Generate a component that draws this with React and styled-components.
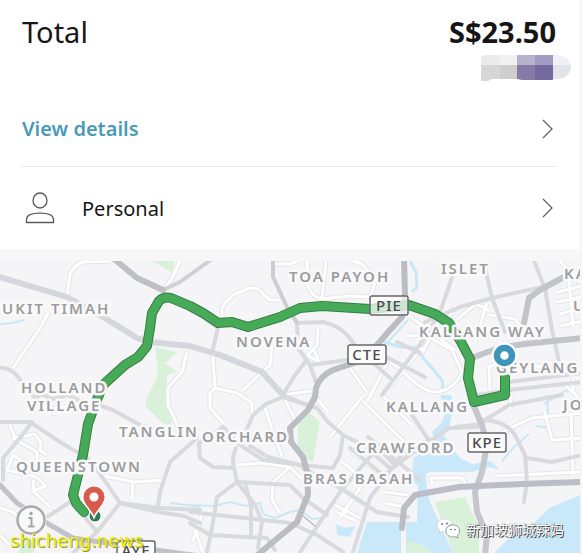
import styled, { createGlobalStyle } from "styled-components";

const GlobalStyle = createGlobalStyle`
  * {
    box-sizing: border-box;
  }
  body {
    margin: 0;
    background-color: #fff;
    font-family: "Noto Sans", "Open Sans", sans-serif;
    color: #161616;
  }
`;
const Page = styled.main`
  padding-right: 2px;
  background-color: #f6f6f6;
`;
const Summary = styled.section`
  padding: 12px 24px 0 22px;
  background-color: #fff;
`;
const TotalRow = styled.div`
  display: flex;
  justify-content: space-between;
  font-size: 29px;
  line-height: 40px;
`;
const TotalLabel = styled.span`
  font-weight: 400;
`;
const TotalPrice = styled.strong`
  font-weight: 700;
`;
const CardNumber = styled.div`
  display: flex;
  justify-content: flex-end;
  height: 36px;
  margin: 3px -16px 0 0;
`;
const Row = styled.a`
  display: flex;
  align-items: center;
  height: ${(props) => props.$height};
  padding-right: 2px;
  border-bottom: ${(props) => (props.$line ? "1px solid #e9e9e9" : "none")};
  color: ${(props) => (props.$accent ? "#4a9bb9" : "#161616")};
  font-size: 20px;
  font-weight: ${(props) => (props.$accent ? 600 : 400)};
  text-decoration: none;
`;
const RowText = styled.span`
  flex: 1;
`;
const RowIcon = styled.span`
  display: flex;
  width: 60px;
  padding-left: 3px;
`;
const MapSection = styled.section`
  position: relative;
  padding-top: 12px;
  background-color: #f7f7f7;
  border-bottom: 2px solid #fff;
  overflow: hidden;
`;
const MapDrawing = styled.svg`
  display: block;
  width: 100%;
  height: auto;
`;
const InfoButton = styled.button`
  position: absolute;
  left: 15px;
  bottom: 17px;
  padding: 0;
  border: none;
  background: none;
  line-height: 0;
  cursor: pointer;
`;
const SiteMark = styled.span`
  position: absolute;
  left: 10px;
  bottom: 0;
  color: #eef000;
  font-family: "DejaVu Sans", sans-serif;
  font-size: 18px;
  line-height: 24px;
  text-shadow: 1px 1px 0 #8f9060;
`;
const AuthorMark = styled.div`
  position: absolute;
  right: 16px;
  bottom: 14px;
  display: flex;
  align-items: center;
  gap: 6px;
  color: #fff;
  font-family: "Noto Sans CJK SC", sans-serif;
  font-size: 14px;
  line-height: 20px;
  text-shadow: 1px 1px 0 #444, 0 0 1px #666;
`;

const Water = styled.path`
  fill: #c9e8fa;
`;
const Park = styled.path`
  fill: #d9f1d9;
`;
const Stream = styled.path`
  fill: none;
  stroke: #c8e8f4;
  stroke-width: ${(props) => props.$width || 2};
`;
const StreetCasing = styled.path`
  fill: none;
  stroke: #e4e5e9;
  stroke-width: 5;
  stroke-linejoin: round;
`;
const Street = styled.path`
  fill: none;
  stroke: #fff;
  stroke-width: 3;
  stroke-linejoin: round;
`;
const Road = styled.path`
  fill: none;
  stroke: ${(props) => props.$color || "#d9dade"};
  stroke-width: ${(props) => props.$width || 4};
  stroke-linejoin: round;
  stroke-linecap: round;
`;
const Place = styled.text`
  fill: #9b9c9f;
  stroke: #f9f9fa;
  stroke-width: 5px;
  stroke-linejoin: round;
  paint-order: stroke;
  font-size: 15px;
  font-weight: 600;
  letter-spacing: 2px;
`;
const ShieldBox = styled.rect`
  fill: #fbfbfb;
  fill-opacity: ${(props) => props.$opacity || 1};
  stroke: #67686b;
  stroke-width: 1.5;
`;
const ShieldText = styled.text`
  fill: #4a4b4e;
  font-size: 15px;
  font-weight: 500;
  letter-spacing: 1px;
  text-anchor: middle;
`;

const streets = [
  "M110 261L83 262Q74 265 70 274L67 297",
  "M48 313L40 328L13 368",
  "M187 352L182 372L168 388L168 405L173 415L180 432",
  "M180 261L172 278L165 288",
  "M222 322V308Q226 299 237 293L250 288Q258 287 264 295L270 300H280",
  "M212 348L215 388L210 393V408L224 424",
  "M215 388L237 393L252 403L252 415",
  "M272 345L270 365L243 390",
  "M307 261L308 286Q312 297 322 299L350 296L370 297L376 280L362 264L353 261",
  "M326 261L322 298",
  "M273 264L290 264L298 261",
  "M318 328L317 346L307 355L319 362L314 350",
  "M350 368L367 392",
  "M387 363L367 402",
  "M283 395L312 391",
  "M265 408L275 438L282 456",
  "M284 398L298 425",
  "M237 465L262 463L290 467L303 480",
  "M290 467L273 482L272 500L280 513",
  "M97 475L115 478L133 482L167 480",
  "M133 482L132 498",
  "M10 425L15 438L35 434L41 443L40 450L47 455M13 455L7 470L36 477L46 486L33 491M13 455L37 470V452L13 438M33 480L34 492L50 507",
  "M46 401L54 414L58 400",
  "M0 508L13 512L30 530",
  "M0 535L12 548",
  "M202 515L193 540",
  "M195 530L203 553",
  "M315 396L328 412",
  "M363 396L330 437",
  "M363 401L393 431L413 449",
  "M382 395L412 425",
  "M408 336L425 335L452 350L462 372Q455 389 437 392Q425 393 410 378L385 356",
  "M422 347L388 389",
  "M402 310L420 324L455 350",
  "M456 305L440 332M456 320L476 304L488 310",
  "M487 303L475 342",
  "M490 315L515 319L525 332",
  "M490 390L489 367L502 362",
  "M508 383V399M535 372L560 368M515 372L560 361",
  "M558 292L582 286M556 302L582 297M560 314L582 308M560 326L582 321",
  "M568 271L573 326",
  "M560 261L582 284",
  "M573 379V393M563 383L578 397",
  "M442 315L422 353",
  "M502 432L532 418L582 413",
  "M510 408L511 397M544 410L552 440L582 438",
  "M571 413L573 475",
  "M496 476L582 472",
  "M432 483L431 478L462 478L469 489",
  "M342 462L373 486M352 452L382 475M335 505L360 518M345 490L362 503M338 513L355 520M365 480L340 518",
  "M385 503L409 508M385 492L408 495",
];
const smallRoads = [
  "M0 368Q10 367 18 377L23 383L35 398",
  "M35 398L42 394L52 399L68 395L78 400",
  "M90 402L113 410L140 425L157 430",
  "M0 422L30 422L60 442L87 458L103 478L120 503L158 512L184 516L200 523",
  "M120 503L160 508L200 510",
  "M32 422L20 438L3 458V480",
  "M120 503L97 532L73 553",
  "M157 512L160 492L170 462L197 438",
  "M47 517L70 502",
  "M83 515L97 532",
  "M218 328L213 348",
  "M297 323L323 322Q338 325 348 336L357 348L390 378",
  "M310 365L347 360M305 362L293 378L283 395",
  "M287 307L297 323L298 348L310 365L316 382",
  "M240 445L253 415L266 404L283 397L317 408L328 422L343 435L363 445L390 468",
  "M343 435L340 455L333 468L300 465L263 460L240 445L223 427L199 443L200 458L213 467L233 468",
  "M283 395L307 405",
  "M250 446L268 457L303 466",
  "M236 448Q231 458 234 468L237 482L255 505L262 522L258 548",
  "M245 483L251 505V535",
  "M237 482L290 485L303 498L327 515",
  "M237 482L217 497L212 528L207 552",
  "M190 512L263 520L290 523L317 535L343 552",
  "M190 523L210 535L267 538L275 550",
  "M380 445L340 492L300 552",
  "M405 450L370 498L353 552",
  "M303 468L340 488L377 512L408 517",
  "M350 448L389 480M368 437L420 480",
  "M382 452L395 465L429 442L449 428L478 427",
  "M388 472L429 439",
  "M412 415L432 445M382 395L422 342L440 312L454 272",
  "M388 358L425 377M397 342L420 353",
  "M425 322L460 307L492 298L542 287",
  "M485 268L492 298L505 332",
  "M534 261L545 288L552 330L562 375",
  "M509 382L582 373M509 390L582 382M475 395L512 390",
  "M483 420Q508 421 516 437L525 455L527 482L524 502",
  "M482 422L509 405L562 395",
  "M527 458L552 462L582 455",
  "M456 427L482 424",
];

const routePath =
  "M505 370L505 395L474 402L468 378L470 359L460 340L449 323L435 314L409 305L370 309L322 306L300 308L280 317L248 327L232 322L218 323L203 313L190 306L171 298Q164 296 159 301L152 313L150 328L147 346L138 357L125 365L103 385L96 402L88 424L83 455L78 475L73 495L76 503L84 512";

const places = [
  { x: 2, y: 314, name: "UKIT TIMAH" },
  { x: 21, y: 393, name: "HOLLAND" },
  { x: 27, y: 411, name: "VILLAGE" },
  { x: 119, y: 437, name: "TANGLIN" },
  { x: 202, y: 442, name: "ORCHARD" },
  { x: 16, y: 472, name: "QUEENSTOWN" },
  { x: 289, y: 282, name: "TOA PAYOH" },
  { x: 236, y: 347, name: "NOVENA" },
  { x: 441, y: 274, name: "ISLET" },
  { x: 564, y: 279, name: "KA" },
  { x: 573, y: 311, name: "U" },
  { x: 419, y: 337, name: "KALLANG WAY" },
  { x: 496, y: 373, name: "GEYLANG" },
  { x: 386, y: 412, name: "KALLANG" },
  { x: 563, y: 410, name: "JO" },
  { x: 356, y: 453, name: "CRAWFORD" },
  { x: 303, y: 484, name: "BRAS BASAH" },
];
const shields = [
  { x: 370, y: 296, width: 38, name: "PIE", opacity: 0.75 },
  { x: 348, y: 345, width: 38, name: "CTE" },
  { x: 468, y: 433, width: 38, name: "KPE" },
  { x: 117, y: 541, width: 38, name: "AYE" },
];

function Chevron() {
  return (
    <svg width="12" height="20" viewBox="0 0 12 20" fill="none">
      <path d="M1 1L10 10L1 19" stroke="#5e5e60" strokeWidth="1.2" />
    </svg>
  );
}

function PersonIcon() {
  return (
    <svg width="30" height="32" viewBox="0 0 30 32" fill="none">
      <ellipse cx="15" cy="8.5" rx="7" ry="7.5" stroke="#5a5a5c" strokeWidth="1.3" />
      <path
        d="M1.500 30.500V27C2 23 8 21.200 15 21.200S28 23 28.500 27V30.500Z"
        stroke="#5a5a5c"
        strokeWidth="1.3"
      />
    </svg>
  );
}

function MaskedNumber() {
  return (
    <svg width="91" height="27" viewBox="0 0 91 27">
      <path d="M0 2Q0 0 6 0H19V10H0Z" fill="#ebebec" />
      <path d="M19 0H37V10H19Z" fill="#f1f1f2" />
      <path d="M0 10H37V24H11L7 26H0Z" fill="#d6d6d8" />
      <path d="M19 10H37V24H19Z" fill="#cececf" />
      <path d="M36 0H54V10H36Z" fill="#b6b1cd" />
      <path d="M54 0H72V10H54Z" fill="#a29bc2" />
      <path d="M36 10H54V25H41L36 24Z" fill="#847ba9" />
      <path d="M54 10H72V25H54Z" fill="#736b9f" />
      <path d="M72 0H78Q88 2 90 10H72Z" fill="#f1f1f5" />
      <path d="M72 10H90Q90 22 78 24H72Z" fill="#e3e3ea" />
    </svg>
  );
}

function WechatLogo() {
  return (
    <svg width="24" height="21" viewBox="0 0 24 21">
      <path
        d="M9 1C4 1 1 4 1 7.500C1 10 2.500 11.500 4 12.500L3.500 15L6.500 13.500L10 14C9 9 12 6 17 6C16 3 13 1 9 1Z"
        fill="#fff"
        stroke="#b9bdc1"
        strokeWidth="0.5"
      />
      <path
        d="M17 7C13 7 10 9.500 10 13S13 19 17 19L19 18.700L22 20L21.300 17.500C23 16.500 23.500 15 23.500 13C23.500 9.500 21 7 17 7Z"
        fill="#fff"
        stroke="#777b80"
        strokeWidth="0.7"
      />
      <g fill="#606367">
        <circle cx="6" cy="6" r="0.9" />
        <circle cx="11" cy="5.500" r="0.9" />
        <circle cx="15" cy="11.500" r="0.8" />
        <circle cx="19" cy="11.500" r="0.8" />
      </g>
    </svg>
  );
}

function TripMap() {
  return (
    <MapDrawing viewBox="0 261 580 292" role="img" aria-label="Trip map">
      <rect x="0" y="261" width="580" height="292" fill="#f5f5f8" />
      <Park d="M152 261H174L173 273ZM155 347L177 352L165 363L177 372L167 375L167 395L172 425L164 424L147 408L145 402L158 375Z" />
      <Park d="M298 423L310 413L320 422L313 462L306 460L298 450Z" />
      <Water d="M440 395L446 409L442 422L432 432L436 444L424 452L413 458L412 480L418 486L417 522H406V553H453L430 502L427 489L426 474L430 472L472 472L489 467L500 470L491 461L472 464L460 458L452 447L444 435L450 424L454 404L451 395Z" />
      <Water d="M367 522H401V553H357ZM336 524L345 528L355 526L350 537L337 535Z" />
      <Water d="M580 495L549 508L535 522L515 532L494 553H580Z" />
      <Park d="M435 502L465 497L472 513L479 525V553H453ZM407 541L420 544L433 553H407Z" />
      <Park d="M18 553L22 542L34 539V553Z" />
      <Stream d="M0 324L12 323L24 320M170 503L200 507M190 505L215 506L230 502L245 506L260 503L263 514L275 518L290 512L300 510L312 519L323 518M502 461L515 446L529 434M547 395L549 428L536 426" />
      <Stream
        d="M410 261L416 272L417 287L412 292M384 342L400 347L419 348L423 358L432 368L442 380L443 389"
        $width={3}
      />
      <Stream d="M544 404L565 391L573 390M388 342L408 320" />
      {streets.map((d) => (
        <StreetCasing key={d} d={d} />
      ))}
      {streets.map((d) => (
        <Street key={d} d={d} />
      ))}
      {smallRoads.map((d) => (
        <Road key={d} d={d} />
      ))}
      <Road
        d="M0 277L67 297L103 317L137 338L150 342L190 346L220 355L262 372L283 395"
        $width={6}
        $color="#d6d7dc"
      />
      <Road d="M273 258V277L287 307L297 323" $width={4} $color="#cdced2" />
      <Road d="M163 290L180 282L212 259" $width={4} $color="#cfd0d4" />
      <Road d="M113 258L137 278L163 290" $width={6} $color="#bfc0c4" />
      <Road
        d="M404 258L405 295L402 317L390 330L377 345L357 362L333 370Q320 376 316 388L315 397L308 410L290 428L291 442L303 457L307 472L308 495L297 522L273 542L256 556"
        $width={6}
        $color="#bcbdc2"
      />
      <Road
        d="M474 357L499 348L524 344L582 338M564 277L540 290L529 298L524 323"
        $width={6}
        $color="#c3c4c8"
      />
      <Road
        d="M472 402L482 425L487 445L482 472L475 492L477 512L487 535L485 555"
        $width={6}
        $color="#c6c7cc"
      />
      <Road d="M402 528L404 508L415 495L459 487L522 484L582 482" $width={6} $color="#bcbdc7" />
      <Road d="M0 485L17 503L50 525L73 538L120 545L200 556" $width={5} $color="#c2c3ca" />
      <Road d="M303 516L315 526" $width={1} $color="#96979a" />

      <Road d={routePath} $width={10} $color="#327f43" />
      <Road d={routePath} $width={8} $color="#47aa59" />
      <circle cx="95" cy="516" r="6" fill="#2f7b4f" stroke="#fff" strokeWidth="1" />

      {places.map((place) => (
        <Place key={place.name} x={place.x} y={place.y}>
          {place.name}
        </Place>
      ))}
      {shields.map((shield) => (
        <g key={shield.name}>
          <ShieldBox
            x={shield.x}
            y={shield.y}
            width={shield.width}
            height="19"
            rx="2"
            $opacity={shield.opacity}
          />
          <ShieldText x={shield.x + shield.width / 2} y={shield.y + 15}>
            {shield.name}
          </ShieldText>
        </g>
      ))}

      <circle cx="504.500" cy="355.500" r="13" fill="#fff" />
      <circle cx="504.500" cy="355.500" r="7.500" fill="none" stroke="#3e95b8" strokeWidth="6.500" />
      <path
        d="M94 516C91 509 83.500 504 83.500 497A10.500 10.500 0 1 1 104.500 497C104.500 504 97 509 94 516Z"
        fill="#d9594c"
        stroke="#fff"
        strokeWidth="3"
        paintOrder="stroke"
      />
      <circle cx="94" cy="497" r="4.500" fill="#fff" />
    </MapDrawing>
  );
}

export default function App() {
  return (
    <>
      <GlobalStyle />
      <Page>
        <Summary>
          <TotalRow>
            <TotalLabel>Total</TotalLabel>
            <TotalPrice>S$23.50</TotalPrice>
          </TotalRow>
          <CardNumber>
            <MaskedNumber />
          </CardNumber>
          <Row href="#details" $height="76px" $line $accent>
            <RowText>View details</RowText>
            <Chevron />
          </Row>
          <Row href="#personal" $height="82px">
            <RowIcon>
              <PersonIcon />
            </RowIcon>
            <RowText>Personal</RowText>
            <Chevron />
          </Row>
        </Summary>
        <MapSection>
          <TripMap />
          <InfoButton aria-label="Map information">
            <svg width="32" height="32" viewBox="0 0 32 32" fill="none">
              <circle cx="16" cy="16" r="15.500" fill="#f9f9fa" />
              <circle cx="16" cy="16" r="13.500" stroke="#a9abaf" strokeWidth="2.500" />
              <path d="M13.500 14H16.500V22.500M13 22.500H19.500" stroke="#a4a5a9" strokeWidth="2" />
              <circle cx="16" cy="9.500" r="1.700" fill="#a4a5a9" />
            </svg>
          </InfoButton>
          <SiteMark>shicheng.news</SiteMark>
          <AuthorMark>
            <WechatLogo />
            <span>新加坡狮城辣妈</span>
          </AuthorMark>
        </MapSection>
      </Page>
    </>
  );
}
